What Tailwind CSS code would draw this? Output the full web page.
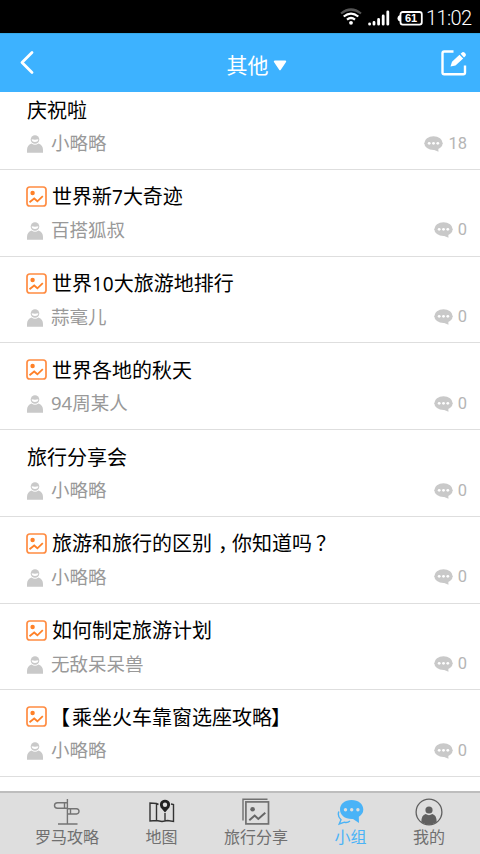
<!DOCTYPE html>
<html lang="zh-CN">
<head>
<meta charset="utf-8">
<title>小组</title>
<script src="https://cdn.jsdelivr.net/npm/@tailwindcss/browser@4"></script>
</head>
<body class="w-[480px] h-[854px] overflow-hidden bg-white flex flex-col font-['Noto_Sans','Noto_Sans_CJK_SC',sans-serif]">
<svg class="hidden">
  <symbol id="pic" viewBox="0 0 21 21"><rect x="1" y="1" width="19" height="19" rx="2.8" fill="none" stroke="#ff8c42" stroke-width="1.7"/><circle cx="6.6" cy="7" r="2.2" fill="#ff8128"/><path d="M3.5 16.3L8.2 12.5L11.4 15.3L16.8 10.2" fill="none" stroke="#ff8128" stroke-width="1.8"/></symbol>
  <symbol id="user" viewBox="0 0 16 18"><path d="M0 17.7V15C0 11.5 1.5 9.5 4.5 8.4Q8 11 11.5 8.4C14.5 9.5 16 11.5 16 15V17.7Z" fill="#c9c9c9"/><circle cx="8" cy="4.5" r="4.3" fill="#c9c9c9"/><path d="M4.7 4.3Q8 5.2 11.3 4.3Q11.3 7 8 7Q4.7 7 4.7 4.3Z" fill="#fff"/></symbol>
  <symbol id="chat" viewBox="0 0 20 16"><ellipse cx="9.5" cy="7.2" rx="9.2" ry="6.9" fill="#c9c9c9"/><path d="M9 13.5L14.5 15.8L14.2 11Z" fill="#c9c9c9"/><g fill="#fff"><circle cx="5.2" cy="7.3" r="1.4"/><circle cx="9.5" cy="7.3" r="1.4"/><circle cx="13.8" cy="7.3" r="1.4"/></g></symbol>
</svg>

<div class="h-[33px] shrink-0 bg-black flex items-center justify-end pr-[9px] text-white">
  <svg class="w-[22px] h-[18px] mr-[6px] mt-[1px]" viewBox="0 0 22 18" fill="none" stroke-width="2.2"><path d="M1 5.5Q11-2.5 21 5.5" stroke="#555"/><path d="M3.7 8.5Q11 2.6 18.3 8.5M7 11.7Q11 8.3 15 11.7" stroke="#fff"/><circle cx="11" cy="14.8" r="1.9" fill="#fff"/></svg>
  <svg class="w-[22px] h-[16px] mr-[7px] mt-[2px]" viewBox="0 0 22 16" stroke="#fff" stroke-width="2.8" stroke-linecap="round"><path d="M1.6 13.8V14.2M6 12.4V14.2M10.6 9.5V14.2M15.2 6V14.2M19.8 1.8V14.2"/></svg>
  <div class="relative w-[26px] h-[15px] mr-[3px] mt-[3px]">
    <svg class="w-[26px] h-[15px]" viewBox="0 0 26 15"><rect x="3.5" y="1" width="21.3" height="12.6" rx="2.3" fill="none" stroke="#fff" stroke-width="1.8"/><path d="M4 4Q0.5 4.2 0.5 7.3T4 10.6Z" fill="#fff"/></svg>
    <span class="absolute left-[3px] top-0 w-[22px] text-center text-[11px] leading-[15px] font-bold font-['Liberation_Sans',sans-serif]">61</span>
  </div>
  <span class="w-[45px] text-right text-[20px] leading-[33px] pt-[3px] tracking-[-0.6px] whitespace-nowrap font-['Roboto',sans-serif] font-light">11:02</span>
</div>

<header class="h-[59px] shrink-0 bg-[#3db2ff] border-t border-[#35a9e8] flex items-center justify-between pl-[19px] pr-[13px]">
  <svg class="w-[28px] h-[28px]" viewBox="0 0 28 28" fill="none" stroke="#fff" stroke-width="2.8" stroke-linecap="round" stroke-linejoin="round"><path d="M13 3.5L3 13.5L13 23.5"/></svg>
  <div class="flex items-center text-white text-[21px] leading-[30px] pt-[4px] pl-[25px]">
    <span>其他</span>
    <svg class="w-[14px] h-[11px] ml-[4px]" viewBox="0 0 14 11"><path d="M1.8 1.5H12.2L7 9.3Z" fill="#fff" stroke="#fff" stroke-width="2" stroke-linejoin="round"/></svg>
  </div>
  <svg class="w-[26px] h-[26px]" viewBox="0 0 26 26"><path d="M12.5 1.5H3.2Q1.5 1.5 1.5 3.2V22.5Q1.5 24.2 3.2 24.2H22.3Q24 24.2 24 22.5V15.5" fill="none" stroke="#fff" stroke-width="2.4"/><path d="M9.5 16.6L11 11.8L18.5 4.8L22.2 8.5L14.5 15.6Z M19.6 3.8L21.3 2.2Q22.3 1.4 23.5 2.6L24.6 3.8Q25.4 5 24.5 6L23 7.4Z" fill="#fff"/></svg>
</header>

<main class="flex-1 min-h-0 overflow-hidden flex flex-col justify-start">
  <ul id="list" class="-mt-[8.8px]"></ul>
</main>

<nav class="h-[63px] shrink-0 bg-[#dedede] border-t-2 border-[#bdbdbd] flex justify-between pl-[35px] pr-[35px] pt-[5px] text-[16px] leading-[23px] text-[#707070]">
  <div class="flex flex-col items-center w-[64px]">
    <svg class="w-[28px] h-[28px]" viewBox="0 0 28 28" fill="none" stroke="#747474" stroke-width="1.4"><path d="M14.4 1V26M5 26H24.5M14.4 4.7H4.5Q1.5 4.9 1.5 7.4T4.5 10.2H14.4M11.5 5V10M14.4 10.7H23.5Q26 10.9 26 13.3T23.5 16H14.4M17.5 11V15.5"/></svg>
    <span class="whitespace-nowrap">罗马攻略</span>
  </div>
  <div class="flex flex-col items-center w-[32px]">
    <svg class="w-[28px] h-[28px]" viewBox="0 0 28 28" fill="none" stroke="#333" stroke-width="1.4"><path d="M10.5 6.5L8.5 5.5L2 5V23L8.5 22.5L14 23.5L19.5 22.5L25.5 23.5V6.5L23 6M8.5 5.5V22.5M17 15V22.5"/><path d="M17 14.5L12.7 9.5Q10.8 5.5 13.5 3Q17 .5 20.5 3Q23.2 5.5 21.3 9.5Z" fill="#222" stroke="none"/><circle cx="17" cy="6.7" r="2.2" fill="#dedede" stroke="none"/></svg>
    <span class="whitespace-nowrap">地图</span>
  </div>
  <div class="flex flex-col items-center w-[64px]">
    <svg class="w-[28px] h-[28px]" viewBox="0 0 28 28" fill="none" stroke="#707070" stroke-width="1.4"><path d="M1 22.5V1.2H25.5"/><rect x="3.9" y="3.9" width="22.6" height="22" stroke-width="1.7"/><circle cx="10.6" cy="11.3" r="2.3" fill="#666" stroke="none"/><path d="M7.3 22.3L12.7 17.6L16.3 21L23.3 14.8" stroke="#666" stroke-width="2"/></svg>
    <span class="whitespace-nowrap">旅行分享</span>
  </div>
  <div class="flex flex-col items-center w-[32px] text-[#4ab3f7]">
    <svg class="w-[28px] h-[28px]" viewBox="0 0 28 28"><path d="M14.5 2C21.5 2 26.3 6 26.3 11.5Q26.3 16 21.8 18.7L22 25L16 21C7.8 21.4 3 17 3 11.5C3 6 7.8 2 14.5 2Z" fill="#4ab3f7"/><path d="M1.8 13.5Q.2 18.5 4 21.8L2.2 26L7.5 24.2Q10.5 25 13 23" fill="none" stroke="#4ab3f7" stroke-width="1.4"/><g fill="#dedede"><circle cx="8.5" cy="11.7" r="1.7"/><circle cx="14.7" cy="11.7" r="1.7"/><circle cx="20.9" cy="11.7" r="1.7"/></g></svg>
    <span class="whitespace-nowrap">小组</span>
  </div>
  <div class="flex flex-col items-center w-[32px]">
    <svg class="w-[28px] h-[28px]" viewBox="0 0 28 28"><path d="M6.3 24.3Q6.3 17 10.7 16Q14 18.3 17.3 16Q21.7 17 21.7 24.3Q14 29 6.3 24.3Z" fill="#606060"/><circle cx="14" cy="12" r="3.6" fill="#606060"/><circle cx="14" cy="14" r="12.9" fill="none" stroke="#606060" stroke-width="1.3"/></svg>
    <span class="whitespace-nowrap">我的</span>
  </div>
</nav>

<script>
const posts = [
  [0, '庆祝啦', '小略略', 18],
  [1, '世界新<span class="text-[19px]">7</span>大奇迹', '百搭狐叔', 0],
  [1, '世界<span class="text-[19px]">10</span>大旅游地排行', '蒜毫儿', 0],
  [1, '世界各地的秋天', '94周某人', 0],
  [0, '旅行分享会', '小略略', 0],
  [1, '旅游和旅行的区别<span class="inline-block w-[20px] pl-[6px]">，</span>你知道吗<span class="inline-block w-[20px] pl-[4px]">？</span>', '小略略', 0],
  [1, '如何制定旅游计划', '无敌呆呆兽', 0],
  [1, '<span class="inline-block w-[20px] -indent-[2px]">【</span>乘坐火车靠窗选座攻略<span class="inline-block w-[20px] -indent-[1px]">】</span>', '小略略', 0],
];
document.getElementById('list').innerHTML = posts.map(([pic, title, author, n]) => `
  <li class="h-[86.75px] border-b border-[#dedede] pl-[26px] pr-[13px] pt-[12px]">
    <div class="flex items-center h-[30px] text-[20px] leading-[30px] text-black">
      ${pic ? '<svg class="w-[21px] h-[21px] mr-[5px] -mt-[1px]"><use href="#pic"/></svg>' : '<span class="w-[1px]"></span>'}
      <span class="whitespace-nowrap pt-[1px]">${title}</span>
    </div>
    <div class="flex items-center h-[35px] text-[18.5px] leading-[35px] text-[#999]">
      <svg class="w-[16px] h-[18px] ml-[1px] mr-[8px] mt-[3px]"><use href="#user"/></svg>
      <span class="flex-1">${author}</span>
      <svg class="w-[20px] h-[16px] mr-[4px] mt-[2px]"><use href="#chat"/></svg>
      <span class="text-[16.5px] text-[#b5b5b5] pt-[1px] font-['Roboto',sans-serif]">${n}</span>
    </div>
  </li>`).join('');
</script>
</body>
</html>
